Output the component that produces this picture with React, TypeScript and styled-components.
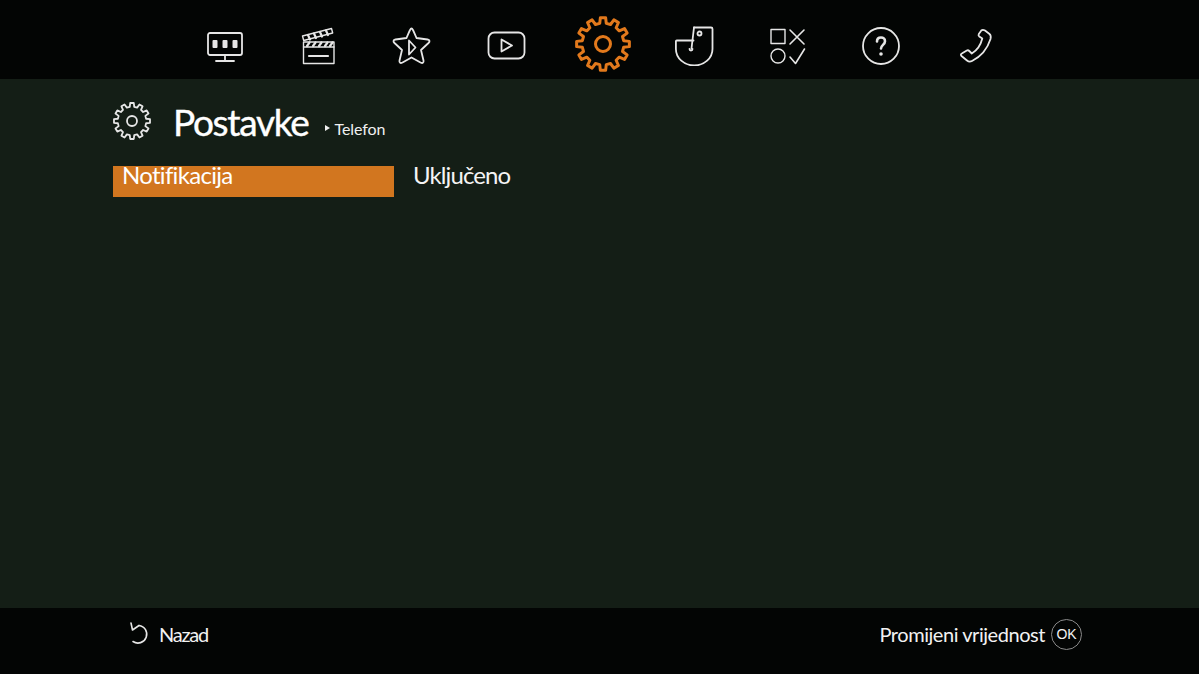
import { createGlobalStyle } from "styled-components";
import styled from "styled-components";

const GlobalStyle = createGlobalStyle`
  html, body {
    margin: 0;
    padding: 0;
    background: #141e16;
  }
  body {
    font-family: "Lato", "Liberation Sans", sans-serif;
    color: #fff;
  }
`;

const Page = styled.div`
  width: 1199px;
  height: 674px;
  display: flex;
  flex-direction: column;
  overflow: hidden;
`;

const TopBar = styled.nav`
  height: 79px;
  box-sizing: border-box;
  flex: none;
  background: #030504;
  display: flex;
  align-items: center;
  padding: 12px 0 0 178px;
`;

const NavItem = styled.div<{ $active?: boolean }>`
  width: 93.75px;
  flex: none;
  display: flex;
  align-items: center;
  justify-content: center;
  padding-left: ${(p) => (p.$active ? "6px" : "0")};
  margin-top: ${(p) => (p.$active ? "-3px" : "0")};
  box-sizing: border-box;
  color: ${(p) => (p.$active ? "#e2791c" : "#e6e6e6")};
`;

const Content = styled.main`
  flex: 1;
  padding: 20px 0 0 113px;
`;

const Heading = styled.div`
  display: flex;
  align-items: center;
  height: 44px;
  color: #e6e6e6;
`;

const Title = styled.h1`
  margin: 1px 0 0 22px;
  font-size: 37px;
  font-weight: 400;
  line-height: 44px;
  letter-spacing: -1.3px;
  color: #fff;
  -webkit-text-stroke: 0.4px #fff;
`;

const Crumb = styled.span`
  display: flex;
  align-items: center;
  gap: 4px;
  margin: 14px 0 0 17px;
  font-size: 16px;
  letter-spacing: -0.1px;
  color: #f0f0f0;
`;

const Marker = styled.i`
  width: 0;
  height: 0;
  border-left: 5px solid #f0f0f0;
  border-top: 3.5px solid transparent;
  border-bottom: 3.5px solid transparent;
`;

const Row = styled.div`
  display: flex;
  margin-top: 23px;
`;

const RowLabel = styled.div`
  width: 281px;
  height: 31px;
  box-sizing: border-box;
  padding-left: 9px;
  background: #d2761f;
  font-size: 24px;
  line-height: 18px;
  letter-spacing: -0.7px;
  color: #fff;
`;

const RowValue = styled.div`
  margin-left: 19px;
  font-size: 24px;
  line-height: 18px;
  letter-spacing: -0.9px;
  color: #f4f4f4;
`;

const BottomBar = styled.footer`
  height: 66px;
  box-sizing: border-box;
  flex: none;
  background: #030504;
  display: flex;
  align-items: center;
  justify-content: space-between;
  padding: 0 117px 14px 129px;
  font-size: 20px;
  letter-spacing: -0.45px;
  color: #f2f2f2;
`;

const Hint = styled.div`
  display: flex;
  align-items: center;
`;

const BackLabel = styled.span`
  margin-left: 8px;
  letter-spacing: -1.2px;
`;

const OkBadge = styled.span`
  width: 29px;
  height: 29px;
  margin-left: 6px;
  border: 1px solid #8a8a8a;
  border-radius: 50%;
  display: flex;
  align-items: center;
  justify-content: center;
  font-size: 14px;
  letter-spacing: 0;
  font-weight: 400;
  font-family: "Liberation Sans", sans-serif;
`;

// zupcanik, broj zubaca i radijusi po ikoni
const gearPath = (cx: number, cy: number, outer: number, inner: number, teeth: number) => {
  const step = (Math.PI * 2) / teeth;
  const pts: string[] = [];
  for (let i = 0; i < teeth; i++) {
    const a = i * step - Math.PI / 2;
    const offs: [number, number][] = [
      [-0.3, inner],
      [-0.19, outer],
      [0.19, outer],
      [0.3, inner],
    ];
    offs.forEach(([o, r]) => {
      const t = a + o * step;
      pts.push(`${(cx + Math.cos(t) * r).toFixed(2)} ${(cy + Math.sin(t) * r).toFixed(2)}`);
    });
  }
  return `M${pts.join("L")}Z`;
};

const Gear = ({ size, stroke, ring }: { size: number; stroke: number; ring: number }) => (
  <svg width={size} height={size} viewBox={`0 0 ${size} ${size}`} fill="none" stroke="currentColor" strokeWidth={stroke} strokeLinejoin="round">
    <path d={gearPath(size / 2, size / 2, size / 2 - stroke / 2, size / 2 - stroke / 2 - size * 0.1, 12)} />
    <circle cx={size / 2} cy={size / 2} r={ring} />
  </svg>
);

const Icon = ({ children }: { children: React.ReactNode }) => (
  <svg width="40" height="40" viewBox="0 0 40 40" fill="none" stroke="currentColor" strokeWidth="1.8" strokeLinecap="round" strokeLinejoin="round">
    {children}
  </svg>
);

const App = () => {
  return (
    <Page>
      <GlobalStyle />
      <TopBar>
        <NavItem>
          <Icon>
            <rect x="3" y="7" width="34" height="22" rx="2" />
            <path d="M20 29v5.500M11 35h18" />
            <rect x="7.500" y="14" width="5" height="8" rx="1" fill="currentColor" stroke="none" />
            <rect x="17.500" y="14" width="5" height="8" rx="1" fill="currentColor" stroke="none" />
            <rect x="27.500" y="14" width="5" height="8" rx="1" fill="currentColor" stroke="none" />
          </Icon>
        </NavItem>
        <NavItem>
          <Icon>
            <path d="M4.500 16h30.500v21.500H4.500z" strokeWidth="1.400" />
            <path d="M4.500 21h30.500" strokeWidth="1.400" />
            <path d="M8 20l2.500-3.500M14 20l2.500-3.500M20 20l2.500-3.500M26 20l2.500-3.500M31 20l2.500-3.500" strokeWidth="2.200" />
            <path d="M10 30h19" strokeWidth="2.200" />
            <path d="M3.500 10l29-7.500 1.200 4.500-29 7.500z" strokeWidth="1.400" />
            <path d="M9 9l2 4.500M15 7.500l2 4.500M21 6l2 4.500M27 4.500l2 4.500" strokeWidth="2.200" />
          </Icon>
        </NavItem>
        <NavItem>
          <Icon>
            <path d="M19.500 2.500c1 0 1.500 1 5 9.500l11 1.500c2.500.5 2.500 2 1 3.500l-7.500 7 2.500 10.500c.5 2.500-1 3-3 2l-9-5-9 5c-2 1-3.500.5-3-2l2.500-10.500-7.500-7c-1.500-1.500-1.500-3 1-3.500l11-1.500c3.500-8.500 4-9.500 5-9.500z" />
            <path d="M17 14.500l6.500 7-6.500 7z" />
          </Icon>
        </NavItem>
        <NavItem>
          <Icon>
            <rect x="2.500" y="6.500" width="36" height="26" rx="6" />
            <path d="M15.500 13.500l10.500 6-10.500 6z" />
          </Icon>
        </NavItem>
        <NavItem $active>
          <Gear size={56} stroke={3} ring={7.500} />
        </NavItem>
        <NavItem>
          <Icon>
            <path d="M20 1.500h17c.8 0 1.500.7 1.500 1.500v20a18.300 16.500 0 0 1-36.600 0v-7.700c0-.5.300-.800.800-.800h16.800" />
            <circle cx="25.500" cy="7.500" r="2" />
            <path d="M20 1.500l-2.500 21" />
            <path d="M15.500 23a1.500 1.500 0 0 0 3 0" />
          </Icon>
        </NavItem>
        <NavItem>
          <Icon>
            <rect x="4" y="3.500" width="14" height="14" strokeWidth="1.400" />
            <path d="M23 4l14 14M37 4L23 18" strokeWidth="1.600" />
            <circle cx="11" cy="30" r="7" strokeWidth="1.400" />
            <path d="M23 31l5.500 6.500 9-14.500" strokeWidth="1.600" />
          </Icon>
        </NavItem>
        <NavItem>
          <Icon>
            <circle cx="20" cy="20" r="18" />
            <path d="M16 15.500c0-2.500 1.700-4 4-4s4 1.500 4 3.700c0 3.500-4 3.800-4 7.300" strokeWidth="2.600" />
            <circle cx="20" cy="28" r="1.800" fill="currentColor" stroke="none" />
          </Icon>
        </NavItem>
        <NavItem>
          <Icon>
            <path d="M30 4.500l4.500 3.500c1.500 1.200 1.500 3 1 5-3 9.500-9.500 17.500-18.500 22-2 1-3.800.5-5-.5l-5.500-4.500c-1-1-.8-2 .3-2.500l5-3c1-.5 1.700-.3 2.500.5l2.500 2.500c5-3 9-9 10.500-15l-3-2c-1-.8-1-1.500-.5-2.500l2.500-3.500c1-1 2-1 3.700-.0z" />
          </Icon>
        </NavItem>
      </TopBar>
      <Content>
        <Heading>
          <Gear size={38} stroke={1.800} ring={5} />
          <Title>Postavke</Title>
          <Crumb>
            <Marker />
            Telefon
          </Crumb>
        </Heading>
        <Row>
          <RowLabel>Notifikacija</RowLabel>
          <RowValue>Uključeno</RowValue>
        </Row>
      </Content>
      <BottomBar>
        <Hint>
          <svg width="22" height="24" viewBox="0 0 22 24" fill="none" stroke="#e6e6e6" strokeWidth="1.600" strokeLinecap="round" strokeLinejoin="round">
            <path d="M10 3.500A8.800 8.800 0 1 1 4 19.500" />
            <path d="M2 1l1.500 7L10 3.500" />
          </svg>
          <BackLabel>Nazad</BackLabel>
        </Hint>
        <Hint>
          Promijeni vrijednost
          <OkBadge>OK</OkBadge>
        </Hint>
      </BottomBar>
    </Page>
  );
};

export default App;
